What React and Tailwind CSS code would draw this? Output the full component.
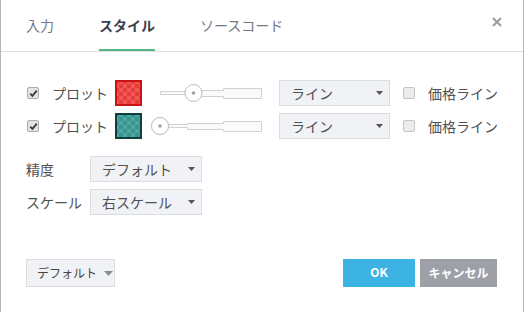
import React from "react";

const FONT = {
  fontFamily: '"Noto Sans CJK JP", "Noto Sans", "Liberation Sans", sans-serif',
};

function Check({ checked }) {
  return (
    <span
      className={
        "flex h-[12px] w-[12px] items-center justify-center rounded-[2px] border " +
        (checked ? "border-[#acacac] bg-[#e4e4e4]" : "border-[#c4c4c4] bg-[#ececec]")
      }
    >
      {checked && (
        <svg width="9" height="9" viewBox="0 0 9 9">
          <path d="M1.2 4.6 L3.4 6.9 L7.8 1.6" fill="none" stroke="#3a3a3a" strokeWidth="1.8" />
        </svg>
      )}
    </span>
  );
}

function Swatch({ id, border, a, b }) {
  return (
    <svg width="27" height="26" viewBox="0 0 27 26" className="shrink-0">
      <defs>
        <pattern id={id} width="8" height="8" patternUnits="userSpaceOnUse">
          <rect width="8" height="8" fill={a} />
          <rect width="4" height="4" fill={b} />
          <rect x="4" y="4" width="4" height="4" fill={b} />
        </pattern>
      </defs>
      <rect x="1" y="1" width="25" height="24" fill={`url(#${id})`} stroke={border} strokeWidth="2" />
    </svg>
  );
}

function Slider({ knob }) {
  return (
    <svg width="112" height="20" viewBox="0 0 112 20" className="shrink-0">
      <path
        d="M10.5 8.5 H37.5 V7.5 H73.5 V5.5 H111.5 V15.5 H73.5 V13.5 H37.5 V11.5 H10.5 Z"
        fill="#fafafa"
        stroke="#cfd0d4"
      />
      <circle cx={knob} cy="10" r="8.5" fill="#fff" stroke="#b9bcc4" />
      <circle cx={knob} cy="10" r="1.8" fill="#9ea1aa" />
    </svg>
  );
}

function Select({ label, width }) {
  return (
    <div
      className={
        "flex h-[26px] items-center justify-between border border-[#dcdde2] bg-[#f1f2f6] pl-[11px] pr-[6px] text-[14px] text-[#505050] " +
        width
      }
    >
      <span>{label}</span>
      <svg width="7" height="4" viewBox="0 0 7 4">
        <path d="M0 0 H7 L3.5 4 Z" fill="#555" />
      </svg>
    </div>
  );
}

function PlotRow({ id, border, a, b, knob }) {
  return (
    <div className="flex h-[26px] items-center">
      <span className="ml-px">
        <Check checked />
      </span>
      <span className="ml-[13px] w-[56px] text-[14px] text-[#505050]">プロット</span>
      <span className="ml-[7px]">
        <Swatch id={id} border={border} a={a} b={b} />
      </span>
      <span className="ml-[8px]">
        <Slider knob={knob} />
      </span>
      <span className="ml-[17px]">
        <Select label="ライン" width="w-[111px]" />
      </span>
      <span className="ml-[13px]">
        <Check />
      </span>
      <span className="ml-[13px] text-[14px] text-[#505050]">価格ライン</span>
    </div>
  );
}

export default function App() {
  return (
    <div
      className="flex h-[312px] w-[524px] flex-col border-x border-[#b5b5b5] bg-white"
      style={FONT}
    >
      <header className="flex h-[52px] shrink-0 items-stretch justify-between border-b border-[#dedede] pl-[25px] pr-[21px]">
        <nav className="flex gap-[45px] text-[14px]">
          <span className="flex items-center border-b-2 border-transparent pt-[2px] text-[#747884]">入力</span>
          <span className="flex items-center border-b-2 border-[#54b685] pt-[2px] font-bold text-[#3b404c]">
            スタイル
          </span>
          <span className="flex items-center border-b-2 border-transparent pt-[2px] text-[#747884]">ソースコード</span>
        </nav>
        <button className="flex items-center pb-[8px] text-[#9c9ea8]">
          <svg width="10" height="10" viewBox="0 0 10 10">
            <path d="M1 1 L9 9 M9 1 L1 9" stroke="currentColor" strokeWidth="2.2" />
          </svg>
        </button>
      </header>

      <div className="flex flex-1 flex-col px-[25px] pt-[28px]">
        <div className="flex flex-col gap-[7px]">
          <PlotRow id="red" border="#c81414" a="#f25757" b="#e93a3a" knob={43.5} />
          <PlotRow id="teal" border="#0f3f3c" a="#4ea6a2" b="#3a928e" knob={10} />
        </div>

        <div className="mt-[17px] grid grid-cols-[64px_112px] gap-y-[7px] text-[14px] text-[#505050]">
          <span className="flex h-[26px] items-center">精度</span>
          <Select label="デフォルト" width="w-[112px]" />
          <span className="flex h-[26px] items-center">スケール</span>
          <Select label="右スケール" width="w-[112px]" />
        </div>

        <div className="mt-[44px] flex items-center justify-between pr-[1px]">
          <button className="flex h-[28px] w-[89px] items-center gap-[7px] border border-[#dcdde2] bg-[#f1f2f6] pl-[10px] text-[12px] text-[#444]">
            <span>デフォルト</span>
            <svg width="9" height="5" viewBox="0 0 9 5">
              <path d="M0 0 H9 L4.5 5 Z" fill="#8a8c94" />
            </svg>
          </button>
          <div className="flex gap-[5px]">
            <button className="h-[28px] w-[72px] bg-[#3db3e4] pb-[2px] text-[12px] font-bold text-white">OK</button>
            <button className="h-[28px] w-[77px] bg-[#9ea0a8] text-[12px] font-bold text-white">キャンセル</button>
          </div>
        </div>
      </div>
    </div>
  );
}
